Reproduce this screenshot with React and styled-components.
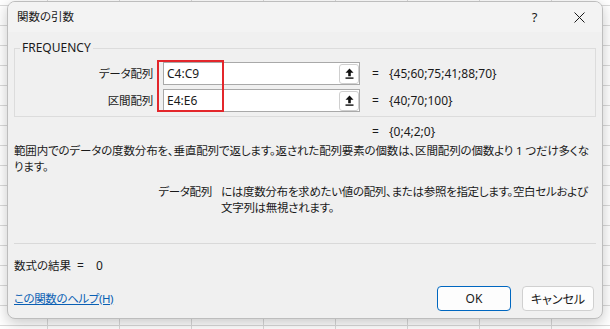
import React from 'react'
import styled, { createGlobalStyle } from 'styled-components'

const GlobalStyle = createGlobalStyle`
  html, body {
    margin: 0;
    padding: 0;
  }
  body {
    font-family: "Noto Sans", "Noto Sans CJK JP", sans-serif;
    font-size: 12px;
    color: #1a1a1a;
    background-color: #ffffff;
    background-image:
      linear-gradient(to right, #dadada 1px, transparent 1px),
      linear-gradient(to bottom, #dadada 1px, transparent 1px);
    background-size: 72px 20px;
    background-position: 119px 5px;
    min-height: 329px;
    overflow: hidden;
  }
`

const Page = styled.div`
  padding: 1px 0 0 7px;
`

const Dialog = styled.div`
  width: 596px;
  box-sizing: border-box;
  background: #f0f0f0;
  border: 1px solid #bdbdbd;
  border-radius: 8px;
  box-shadow: 0 4px 14px rgba(0, 0, 0, 0.22);
  overflow: hidden;
  font-feature-settings: "palt";
`

const TitleBar = styled.div`
  height: 30px;
  display: flex;
  align-items: center;
  background: #f3f3f3;
  padding-left: 9px;
`

const Title = styled.div`
  flex: 1;
  font-size: 11.5px;
  line-height: 16px;
`

const Controls = styled.div`
  display: flex;
  height: 100%;
`

const CtrlButton = styled.div`
  width: 45px;
  display: flex;
  align-items: center;
  justify-content: center;
  font-size: 13px;
  color: #1a1a1a;
`

const Body = styled.div`
  padding: 8px 6px 7px;
`

const Group = styled.fieldset`
  margin: 0;
  padding: 6px 0 4px;
  border: 1px solid #dcdcdc;
  min-width: 0;
`

const Legend = styled.legend`
  margin-left: 5px;
  padding: 0 2px;
  line-height: 16px;
  font-size: 12px;
`

const ArgRows = styled.div`
  position: relative;
  display: flex;
  flex-direction: column;
  gap: 4px;
`

const ArgRow = styled.div`
  display: grid;
  grid-template-columns: 148px 197px 29px 1fr;
  align-items: center;
  line-height: 16px;
`

const ArgLabel = styled.span`
  text-align: right;
  padding-right: 10px;
  font-size: 11.5px;
  letter-spacing: -0.2px;
`

const RefInput = styled.div`
  height: 23px;
  box-sizing: border-box;
  background: #ffffff;
  border: 1px solid #a9a9a9;
  display: flex;
  align-items: center;
  padding: 0 0 0 3px;
`

const InputText = styled.span`
  flex: 1;
  font-size: 12px;
`

const PickButton = styled.span`
  width: 20px;
  height: 20px;
  box-sizing: border-box;
  border: 1px solid #cfcfcf;
  border-radius: 3px;
  background: #ffffff;
  display: flex;
  align-items: center;
  justify-content: center;
`

const Equals = styled.span`
  padding-left: 12px;
`

const Value = styled.span`
  white-space: nowrap;
`

const Highlight = styled.div`
  position: absolute;
  left: 142px;
  top: -2px;
  width: 67px;
  height: 52px;
  box-sizing: border-box;
  border: 2px solid #e3262b;
  pointer-events: none;
`

const ResultRow = styled(ArgRow)`
  margin-top: 7px;
  padding-left: 1px;
`

const Description = styled.p`
  margin: 3px 0 0;
  padding-right: 6px;
  line-height: 16px;
  font-size: 11.5px;
  letter-spacing: -0.15px;
`

const ArgHelp = styled.div`
  display: grid;
  grid-template-columns: 198px 1fr;
  column-gap: 9px;
  margin-top: 9px;
  padding-right: 8px;
  line-height: 16px;
  font-size: 11.5px;
  letter-spacing: -0.3px;
`

const HelpLabel = styled.span`
  text-align: right;
`

const Divider = styled.div`
  height: 1px;
  background: #d9d9d9;
  margin-top: 27px;
`

const FormulaResult = styled.div`
  margin-top: 14px;
  line-height: 16px;
  display: flex;
  font-size: 11.5px;
`

const ResultPart = styled.span`
  margin-left: ${({ $gap }) => $gap}px;
  font-size: 12px;
`

const Footer = styled.div`
  display: flex;
  align-items: center;
  justify-content: space-between;
  margin-top: 12px;
  padding-right: 2px;
`

const HelpLink = styled.a`
  color: #0a5fb4;
  text-decoration: underline;
  line-height: 16px;
  font-size: 11.5px;
  letter-spacing: -0.4px;
`

const ButtonGroup = styled.div`
  display: flex;
  gap: 11px;
`

const DialogButton = styled.button`
  width: ${({ $w }) => $w}px;
  height: 25px;
  box-sizing: border-box;
  border-radius: 4px;
  border: 1px solid ${({ $primary }) => ($primary ? '#0067c0' : '#d0d0d0')};
  background: #fdfdfd;
  font-family: inherit;
  font-size: 12px;
  color: #1a1a1a;
  padding: 0;
  font-feature-settings: "palt";
`

const PickIcon = () => (
  <svg width="9" height="11" viewBox="0 0 9 11">
    <path d="M4.5 0.5 L8.5 4.8 H5.8 V8.2 H3.2 V4.8 H0.5 Z" fill="#111" />
    <rect x="0.5" y="9.4" width="8" height="1.4" fill="#111" />
  </svg>
)

const CloseIcon = () => (
  <svg width="11" height="11" viewBox="0 0 11 11">
    <path d="M0.5 0.5 L10.5 10.5 M10.5 0.5 L0.5 10.5" stroke="#1a1a1a" strokeWidth="1" fill="none" />
  </svg>
)

const args = [
  { label: 'データ配列', ref: 'C4:C9', value: '{45;60;75;41;88;70}' },
  { label: '区間配列', ref: 'E4:E6', value: '{40;70;100}' },
]

const App = () => {
  return (
    <>
      <GlobalStyle />
      <Page>
        <Dialog>
          <TitleBar>
            <Title>関数の引数</Title>
            <Controls>
              <CtrlButton>?</CtrlButton>
              <CtrlButton>
                <CloseIcon />
              </CtrlButton>
            </Controls>
          </TitleBar>
          <Body>
            <Group>
              <Legend>FREQUENCY</Legend>
              <ArgRows>
                {args.map((a) => (
                  <ArgRow key={a.label}>
                    <ArgLabel>{a.label}</ArgLabel>
                    <RefInput>
                      <InputText>{a.ref}</InputText>
                      <PickButton>
                        <PickIcon />
                      </PickButton>
                    </RefInput>
                    <Equals>=</Equals>
                    <Value>{a.value}</Value>
                  </ArgRow>
                ))}
                <Highlight />
              </ArgRows>
            </Group>
            <ResultRow>
              <span />
              <span />
              <Equals>=</Equals>
              <Value>{'{0;4;2;0}'}</Value>
            </ResultRow>
            <Description>
              範囲内でのデータの度数分布を、垂直配列で返します。返された配列要素の個数は、区間配列の個数より 1 つだけ多くなります。
            </Description>
            <ArgHelp>
              <HelpLabel>データ配列</HelpLabel>
              <span>には度数分布を求めたい値の配列、または参照を指定します。空白セルおよび文字列は無視されます。</span>
            </ArgHelp>
            <Divider />
            <FormulaResult>
              <span>数式の結果</span>
              <ResultPart $gap={6}>=</ResultPart>
              <ResultPart $gap={12}>0</ResultPart>
            </FormulaResult>
            <Footer>
              <HelpLink>この関数のヘルプ(H)</HelpLink>
              <ButtonGroup>
                <DialogButton $primary $w={74}>OK</DialogButton>
                <DialogButton $w={72}>キャンセル</DialogButton>
              </ButtonGroup>
            </Footer>
          </Body>
        </Dialog>
      </Page>
    </>
  )
}

export default App
